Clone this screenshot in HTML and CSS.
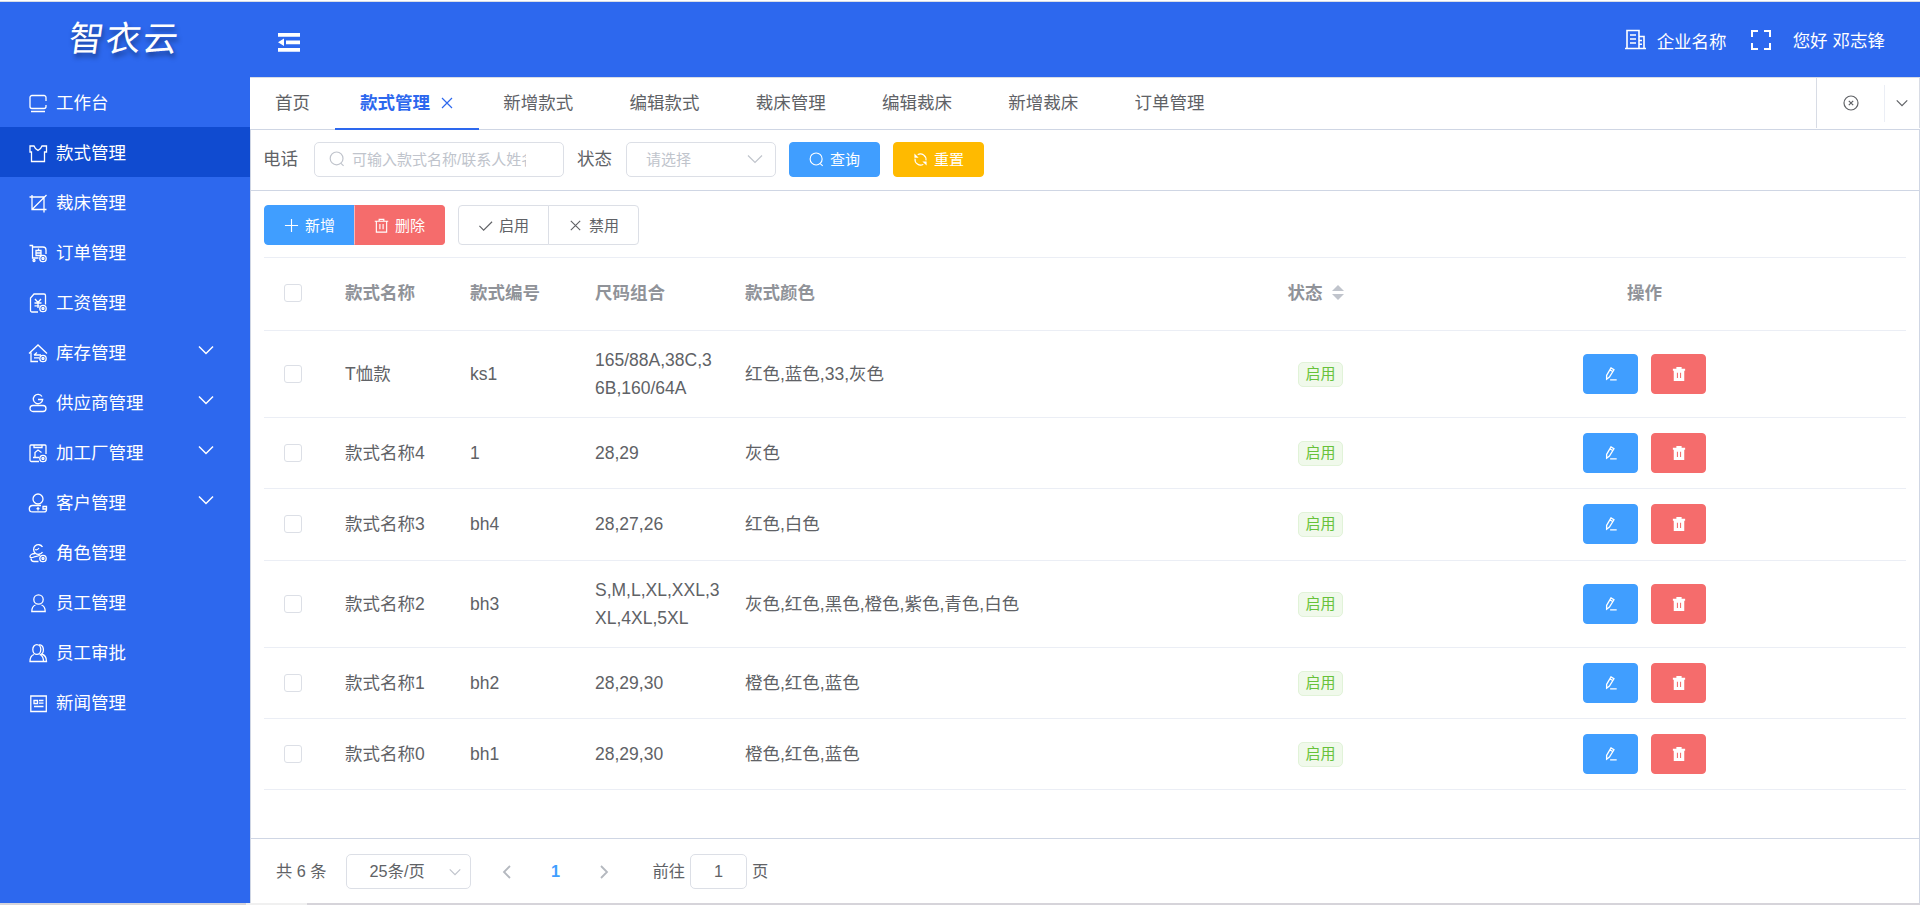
FILE: index.html
```
<!DOCTYPE html>
<html lang="zh-CN">
  <head>
    <meta charset="UTF-8" />
    <meta name="viewport" content="width=device-width, initial-scale=1.0" />
    <title>智衣云</title>
    <link rel="stylesheet" href="styles.css">
  </head>
  <body>
    <svg class="sprite">
      <symbol id="i-badge" viewBox="0 0 20 20"><circle cx="15" cy="15.5" r="3.2" /><circle cx="15" cy="15.5" r="1" /></symbol>
      <symbol id="i-down" viewBox="0 0 16 16"><path d="M1 4.500l7 7 7-7" /></symbol>
      <symbol id="i-search" viewBox="0 0 16 16"><circle cx="7.600" cy="7.400" r="6.400" /><path d="M12 12.300l2.600 2.600" /></symbol>
      <symbol id="i-close" viewBox="0 0 16 16"><path d="M3 3l10 10M13 3L3 13" /></symbol>
      <symbol id="i-edit" viewBox="0 0 16 16"><path d="M3 9.500L8 1l3.400 2.200-5.200 8.300L3 14zM6.800 3.200l3.400 2.200M7 14.800h7.500" /></symbol>
      <symbol id="i-trash" viewBox="0 0 16 16"><path d="M.8 3.500h14.400M5.500 3.500v-2h5v2M2.500 3.500v11.500h11v-11.500M6.300 6.500v5.500M9.700 6.500v5.500" /></symbol>
      <symbol id="i-trash-fill" viewBox="0 0 16 16"><path fill="#fff" stroke="none" fill-rule="evenodd" d="M5 0h6v2h4v2.300H1V2h4zM2 4.300h12V16H2zM5.600 6.500v6h1.200v-6zM9.200 6.500v6h1.200v-6z" /></symbol>
    </svg>

    <div class="app">
      <aside class="sidebar">
        <div class="logo"><span>智衣云</span></div>
        <ul class="menu">
          <li>
            <svg class="icon" viewBox="0 0 20 20"><path d="M18 8V4.500a2 2 0 0 0-2-2H4a2 2 0 0 0-2 2v9a2 2 0 0 0 2 2h12a2 2 0 0 0 2-2V12M3 18.500h14" /></svg>
            <span>工作台</span>
          </li>
          <li class="active">
            <svg class="icon" viewBox="0 0 20 20"><path d="M2 3h4l1.500 2.500L10 7.500l2.500-2L14 3h4.500v6H16.500v9.500h-13V9H2z" /></svg>
            <span>款式管理</span>
          </li>
          <li>
            <svg class="icon" viewBox="0 0 20 20"><path d="M1.500 4h14.500v15.500M4 2v14.500h14.500M4.500 16L18.500 2" /></svg>
            <span>裁床管理</span>
          </li>
          <li>
            <svg class="icon" viewBox="0 0 20 20"><path d="M1.500 2.500h3v12.500h6M4.500 4H15a3 3 0 0 1 3 3v4M8 7.500h5v5H8zM8 10h5M10.500 5.500v2" /><circle cx="6" cy="17.500" r="1" /><use href="#i-badge" /></svg>
            <span>订单管理</span>
          </li>
          <li>
            <svg class="icon" viewBox="0 0 20 20"><path d="M10 19H4a1.500 1.500 0 0 1-1.500-1.500V5L6 1h10A1.500 1.500 0 0 1 17.500 2.500v9M7 6l3 3.500L13 6M10 9.500V15M6.500 10h7M6.500 12.800h5" /><use href="#i-badge" /></svg>
            <span>工资管理</span>
          </li>
          <li>
            <svg class="icon" viewBox="0 0 20 20"><path d="M1 10.500l9-8.500 9 8.500M3 9.500v9h7M6 12h7M6 12l3-2.500M6 14.800h5" /><use href="#i-badge" /></svg>
            <span>库存管理</span>
            <svg class="arrow"><use href="#i-down" /></svg>
          </li>
          <li>
            <svg class="icon" viewBox="0 0 20 20"><path d="M14 3.500A4.700 4.700 0 1 0 14.700 6.500H10" /><rect x="2" y="12.500" width="16" height="6" rx="3" /></svg>
            <span>供应商管理</span>
            <svg class="arrow"><use href="#i-down" /></svg>
          </li>
          <li>
            <svg class="icon" viewBox="0 0 20 20"><path d="M11 18.500H3.500a1.500 1.500 0 0 1-1.500-1.500V3a1 1 0 0 1 1-1h14a1 1 0 0 1 1 1v8M6 2v2.500h8V2M7 14.500V9.500L10 7l3.500 2.500M5 14.500h6" /><use href="#i-badge" /></svg>
            <span>加工厂管理</span>
            <svg class="arrow"><use href="#i-down" /></svg>
          </li>
          <li>
            <svg class="icon" viewBox="0 0 20 20"><circle cx="10" cy="6" r="5" /><path d="M13 12.500H4.500a3.200 3.200 0 0 0 0 6.400H16a2.500 2.500 0 0 0 2.500-2.500v-2.900H15v2.500h3.500M10 14v3.500M8.500 15.700h3" /></svg>
            <span>客户管理</span>
            <svg class="arrow"><use href="#i-down" /></svg>
          </li>
          <li>
            <svg class="icon" viewBox="0 0 20 20"><path d="M14.500 4A4.800 4.800 0 1 0 14.500 9M7 6.500c2 1 3 0 4-1.500M7 10.500c-3 0-5 1.500-5 3s2 1.500 4 .5 4-.5 6-2M3 15.500c0 2 1.500 3 3 3h4.500" /><use href="#i-badge" /></svg>
            <span>角色管理</span>
          </li>
          <li>
            <svg class="icon" viewBox="0 0 20 20"><circle cx="10.500" cy="6.500" r="4.700" /><path d="M7.500 12c-2.500.8-3.700 2.500-3.700 6.500h13.400c0-4-1.200-5.700-3.700-6.500" /></svg>
            <span>员工管理</span>
          </li>
          <li>
            <svg class="icon" viewBox="0 0 20 20"><ellipse cx="8.800" cy="6.500" rx="4" ry="4.900" /><path d="M11 2c5-1 5.500 7 2.500 9 3 .8 5 3 5 7.500h-2.500M6 11.500c-2.500.8-4 2.500-4 7h13.500c0-4.500-1.500-6.200-4-7" /></svg>
            <span>员工审批</span>
          </li>
          <li>
            <svg class="icon" viewBox="0 0 20 20"><path d="M2.800 3h15.500v15.500H2.800zM6 7.500h3.500v3H6zM11 7.500h4.500M11 10.200h4.500M6 13.500h9.500" /></svg>
            <span>新闻管理</span>
          </li>
        </ul>
      </aside>

      <div class="main">
        <header class="header">
          <svg class="fold" viewBox="0 0 22 19"><path fill="#fff" d="M0 0h22v3.700H0zM8 7.500h14v3.700H8zM0 15h22v3.700H0zM6 5.600v7.500L0 9.350z" /></svg>
          <div class="header-right">
            <svg class="company-icon" viewBox="0 0 21 21"><path d="M2 19.500V1.500h12v18M14 7.500h5v12M0 19.500h21M5 6h6M5 10h6M5 14h6M14 11.500h3M14 15.200h3" /></svg>
            <span class="company">企业名称</span>
            <svg class="full-icon" viewBox="0 0 20 20"><path d="M1 7V1h6M13 1h6v6M19 13v6h-6M7 19H1v-6" /></svg>
            <span class="user">您好 邓志锋</span>
          </div>
        </header>

        <nav class="tabs">
          <div class="tab">首页</div>
          <div class="tab active">款式管理<svg class="tab-close"><use href="#i-close" /></svg></div>
          <div class="tab">新增款式</div>
          <div class="tab">编辑款式</div>
          <div class="tab">裁床管理</div>
          <div class="tab">编辑裁床</div>
          <div class="tab">新增裁床</div>
          <div class="tab">订单管理</div>
          <div class="tabs-tools">
            <div class="close-all">
              <svg viewBox="0 0 16 16"><circle cx="8" cy="8" r="7" /><path d="M5.800 5.800l4.400 4.400M10.200 5.800l-4.400 4.400" /></svg>
            </div>
            <div class="more"><svg viewBox="0 0 16 16"><use href="#i-down" /></svg></div>
          </div>
        </nav>

        <form class="search">
          <label for="keyword">电话</label>
          <div class="input">
            <svg><use href="#i-search" /></svg>
            <input type="text" id="keyword" placeholder="可输入款式名称/联系人姓名/电话" />
          </div>
          <label>状态</label>
          <div class="select"><span>请选择</span><svg><use href="#i-down" /></svg></div>
          <button type="button" class="btn primary small"><svg><use href="#i-search" /></svg>查询</button>
          <button type="button" class="btn warning small">
            <svg viewBox="0 0 16 16"><path d="M5 2.800A6 6 0 0 1 13.800 9M11 13.200A6 6 0 0 1 2.200 7" /><path d="M1.500 1.500v4.500h4.500zM14.500 14.500v-4.500h-4.500z" fill="#fff" stroke="none" /></svg>重置
          </button>
        </form>

        <section class="content">
          <div class="toolbar">
            <div class="btn-group">
              <button class="btn primary"><svg viewBox="0 0 16 16"><path d="M8 1v14M1 8h14" /></svg>新增</button>
              <button class="btn danger"><svg><use href="#i-trash" /></svg>删除</button>
            </div>
            <div class="btn-group">
              <button class="btn"><svg viewBox="0 0 16 16"><path d="M1.500 8.500l4.500 4.500L15 4" /></svg>启用</button>
              <button class="btn"><svg><use href="#i-close" /></svg>禁用</button>
            </div>
          </div>

          <table class="table">
            <colgroup>
              <col class="c-check" /><col class="c-name" /><col class="c-code" /><col class="c-size" /><col class="c-color" /><col class="c-status" /><col />
            </colgroup>
            <thead>
              <tr>
                <th><span class="checkbox"></span></th>
                <th>款式名称</th>
                <th>款式编号</th>
                <th>尺码组合</th>
                <th>款式颜色</th>
                <th class="center"><span class="sortable">状态<i class="sort"></i></span></th>
                <th class="center">操作</th>
              </tr>
            </thead>
            <tbody id="rows"></tbody>
          </table>
        </section>

        <footer class="pagination">
          <span class="total">共 6 条</span>
          <div class="page-size"><span>25条/页</span><svg viewBox="0 0 16 16"><use href="#i-down" /></svg></div>
          <svg class="prev" viewBox="0 0 16 16"><path d="M11 2L5 8l6 6" /></svg>
          <span class="page">1</span>
          <svg class="next" viewBox="0 0 16 16"><path d="M5 2l6 6-6 6" /></svg>
          <span class="jump">前往</span>
          <input type="text" value="1" />
          <span>页</span>
        </footer>
      </div>
    </div>
    <div class="scrollbar"><div class="track"></div></div>

    <script>
      const lista = [
        ["T恤款", "ks1", "165/88A,38C,36B,160/64A", "红色,蓝色,33,灰色"],
        ["款式名称4", "1", "28,29", "灰色"],
        ["款式名称3", "bh4", "28,27,26", "红色,白色"],
        ["款式名称2", "bh3", "S,M,L,XL,XXL,3XL,4XL,5XL", "灰色,红色,黑色,橙色,紫色,青色,白色"],
        ["款式名称1", "bh2", "28,29,30", "橙色,红色,蓝色"],
        ["款式名称0", "bh1", "28,29,30", "橙色,红色,蓝色"],
      ];

      document.querySelector("#rows").innerHTML = lista
        .map(
          ([name, code, size, color]) => `
          <tr>
            <td><span class="checkbox"></span></td>
            <td>${name}</td>
            <td>${code}</td>
            <td>${size}</td>
            <td>${color}</td>
            <td class="center"><span class="tag">启用</span></td>
            <td class="center">
              <div class="actions">
                <button class="btn primary"><svg><use href="#i-edit" /></svg></button>
                <button class="btn danger"><svg><use href="#i-trash-fill" /></svg></button>
              </div>
            </td>
          </tr>`
        )
        .join("");
    </script>
  </body>
</html>
```
FILE: styles.css
```
* {
  margin: 0;
  padding: 0;
  box-sizing: border-box;
}

body {
  font-family: "Liberation Sans", "Noto Sans CJK SC", sans-serif;
  font-size: 17.5px;
  color: #606266;
  background-color: #fff;
  height: 905px;
  overflow: hidden;
}

input,
button {
  font-family: inherit;
}

svg {
  fill: none;
  stroke: currentColor;
  stroke-width: 1.2;
  flex-shrink: 0;
}

.sprite {
  display: none;
}

.app {
  display: flex;
  height: 903px;
  border-top: 1px solid #fff;
  box-shadow: inset 0 1px #d8dce5;
  padding-top: 1px;
}

/* Menu lateral */
.sidebar {
  width: 250px;
  background-color: #2d68ee;
  color: #fff;
  flex-shrink: 0;
}

.logo {
  height: 75px;
  padding: 14px 0 0 69px;
  font-size: 35px;
  line-height: 46px;
  letter-spacing: 2px;
  text-shadow: 2px 4px 5px rgba(0, 0, 0, 0.4);
}

.logo span {
  display: inline-block;
  transform: skewX(-8deg);
}

.menu {
  list-style: none;
}

.menu li {
  display: flex;
  align-items: center;
  height: 50px;
  padding-left: 28px;
}

.menu li.active {
  background-color: #104bd0;
}

.menu span {
  padding-bottom: 2px;
}

.icon {
  width: 20px;
  height: 20px;
  margin: 2px 8px 0 0;
  stroke-width: 1.3;
}

.arrow {
  width: 16px;
  height: 16px;
  margin: 0 36px 4px auto;
  stroke-width: 1.5;
}

/* Conteúdo */
.main {
  flex: 1;
  min-width: 0;
  display: flex;
  flex-direction: column;
}

.header {
  height: 75px;
  flex-shrink: 0;
  background-color: #2d68ee;
  color: #fff;
  display: flex;
  align-items: center;
  justify-content: space-between;
  padding: 1px 35px 0 28px;
}

.fold {
  width: 22px;
  height: 19px;
  margin-top: 5px;
  stroke: none;
}

.header-right {
  display: flex;
  align-items: center;
}

.company-icon {
  width: 21px;
  height: 21px;
  margin: 0 11px 2px 0;
  stroke-width: 1.6;
}

.full-icon {
  width: 20px;
  height: 20px;
  margin: 0 22px 0 24px;
  stroke-width: 2;
}

.company {
  padding-top: 1px;
}

.user {
  padding-bottom: 1px;
}

.tabs {
  display: flex;
  height: 53px;
  flex-shrink: 0;
  border-top: 1px solid #d8dce5;
  border-bottom: 1px solid #cfd6e4;
  padding-left: 1px;
}

.tab {
  display: flex;
  align-items: center;
  height: 52px;
  padding: 0 28px 5px 28.25px;
}

.tab:first-child {
  padding: 0 25px 5px 24px;
}

.tab.active {
  color: #2d68ee;
  font-weight: bold;
  border-bottom: 2px solid #2d68ee;
  padding: 0 25px 3px 25px;
  margin-right: -4px;
}

.tab-close {
  width: 16px;
  height: 16px;
  margin: 3px -1px 0 9px;
}

.tabs-tools {
  display: flex;
  align-items: center;
  margin-left: auto;
  border-left: 1px solid #d8dce5;
  border-right: 1px solid #d8dce5;
  height: 50px;
}

.close-all {
  width: 68px;
  height: 37px;
  display: flex;
  align-items: center;
  justify-content: center;
  border-right: 1px solid #ebeef5;
}

.close-all svg {
  width: 16px;
  height: 16px;
}

.more {
  width: 34px;
  display: flex;
  justify-content: center;
}

.more svg {
  width: 12px;
  height: 12px;
  stroke-width: 1.6;
}

.search {
  display: flex;
  align-items: center;
  height: 61px;
  flex-shrink: 0;
  padding: 0 0 2px 12px;
  border: solid #cfd6e4;
  border-width: 0 1px 1px 1px;
}

.search label {
  padding-bottom: 3px;
}

.input,
.select,
.page-size {
  display: flex;
  align-items: center;
  height: 35px;
  border: 1px solid #dcdfe6;
  border-radius: 5px;
  font-size: 15px;
  color: #c0c4cc;
}

.input {
  width: 250px;
  margin: 0 13px 0 16px;
  padding: 0 37px 0 14px;
}

.input svg {
  width: 16px;
  height: 16px;
  margin-right: 7px;
}

.input input {
  flex: 1;
  min-width: 0;
  border: none;
  outline: none;
  font-size: 15px;
}

.input input::placeholder {
  color: #c0c4cc;
}

.select {
  width: 150px;
  margin: 0 13px 0 14px;
  justify-content: space-between;
  padding: 0 12px 0 19px;
}

.select span {
  padding-bottom: 1px;
}

.select svg {
  width: 16px;
  height: 16px;
}

.btn {
  display: flex;
  align-items: center;
  justify-content: center;
  width: 91px;
  height: 40px;
  padding-bottom: 2px;
  border: 1px solid #dcdfe6;
  border-radius: 4px;
  background-color: #fff;
  color: #606266;
  font-size: 15px;
}

.btn svg {
  width: 15px;
  height: 15px;
  margin: 2px 6px 0 0;
}

.btn.small {
  height: 35px;
  margin-right: 13px;
}

.btn.primary {
  background-color: #409eff;
  border-color: #409eff;
  color: #fff;
}

.btn.danger {
  background-color: #f56c6c;
  border-color: #f56c6c;
  color: #fff;
}

.btn.warning {
  background-color: #ffba00;
  border-color: #ffba00;
  color: #fff;
}

.content {
  flex: 1;
  padding: 14px 13px 0 13px;
  border: solid #cfd6e4;
  border-width: 0 1px;
}

.toolbar {
  display: flex;
  gap: 13px;
  margin-bottom: 12px;
}

.btn-group {
  display: flex;
}

.btn-group .btn:first-child {
  border-radius: 4px 0 0 4px;
}

.btn-group .btn:last-child {
  border-radius: 0 4px 4px 0;
  margin-left: -1px;
}

.btn-group .btn.danger {
  border-left-color: #fab6b6;
}

/* Tabela */
.table {
  width: 100%;
  table-layout: fixed;
  border-spacing: 0;
  border-top: 1px solid #ebeef5;
}

.c-check {
  width: 69px;
}

.c-name,
.c-code,
.c-status {
  width: 125px;
}

.c-size {
  width: 150px;
}

.c-color {
  width: 525px;
}

.table th,
.table td {
  height: 71px;
  padding: 0 12px;
  border-bottom: 1px solid #ebeef5;
  text-align: left;
  line-height: 28px;
  word-break: break-all;
}

.table th {
  height: 73px;
  padding-bottom: 2px;
  color: #909399;
}

.table tbody tr:nth-child(3n + 1) td {
  height: 87px;
}

.table tbody tr:nth-child(3) td {
  height: 72px;
  padding-bottom: 1px;
}

.table .center {
  text-align: center;
}

.checkbox {
  display: block;
  width: 18px;
  height: 18px;
  margin-left: 8px;
  border: 1px solid #dcdfe6;
  border-radius: 3px;
}

.sortable {
  display: inline-flex;
  align-items: center;
  gap: 9px;
  padding: 0 10px 1px 0;
  vertical-align: middle;
}

/* Setas de ordenação */
.sort::before,
.sort::after {
  content: "";
  display: block;
  border: 6.5px solid transparent;
}

.sort::before {
  border-top: none;
  border-bottom: 6px solid #c0c4cc;
  margin-bottom: 3px;
}

.sort::after {
  border-bottom: none;
  border-top: 6px solid #c0c4cc;
}

.tag {
  display: block;
  width: 45px;
  height: 25px;
  line-height: 21px;
  margin: 0 auto;
  border: 1px solid #e1f3d8;
  border-radius: 5px;
  background-color: #f0f9eb;
  color: #67c23a;
  font-size: 15px;
}

.actions {
  display: flex;
  justify-content: center;
  gap: 13px;
}

.actions .btn {
  width: 55px;
  padding: 0;
}

.actions .btn svg {
  width: 14px;
  height: 14px;
  margin: 0;
  stroke-width: 1.5;
}

.pagination {
  display: flex;
  align-items: center;
  height: 65px;
  flex-shrink: 0;
  border: solid #cfd6e4;
  border-width: 1px 1px 0 1px;
  padding: 1px 0 0 25px;
  font-size: 16.25px;
}

.pagination span {
  padding-bottom: 3px;
}

.page-size {
  width: 125px;
  margin-left: 19px;
  padding: 0 9px 0 23px;
  justify-content: space-between;
  font-size: 16.25px;
  color: #606266;
}

.page-size svg {
  width: 12px;
  height: 12px;
  color: #c0c4cc;
  stroke-width: 1.6;
}

.prev,
.next {
  width: 16px;
  height: 16px;
  color: #b4b8bf;
  stroke-width: 1.8;
}

.prev {
  margin-left: 28px;
}

.pagination .page {
  width: 81px;
  padding: 0 0 1px 1px;
  text-align: center;
  color: #409eff;
  font-weight: bold;
}

.jump {
  margin-left: 41px;
}

.pagination input {
  width: 57px;
  height: 35px;
  margin: 0 5px 0 5px;
  border: 1px solid #dcdfe6;
  border-radius: 5px;
  text-align: center;
  font-size: 16.25px;
  color: #606266;
}

/* Barra de rolagem no rodapé */
.scrollbar {
  height: 2px;
  background-color: #d6d4da;
}

.track {
  width: 61px;
  height: 2px;
  margin-left: 246px;
  background-color: #f0f0f0;
}
```
